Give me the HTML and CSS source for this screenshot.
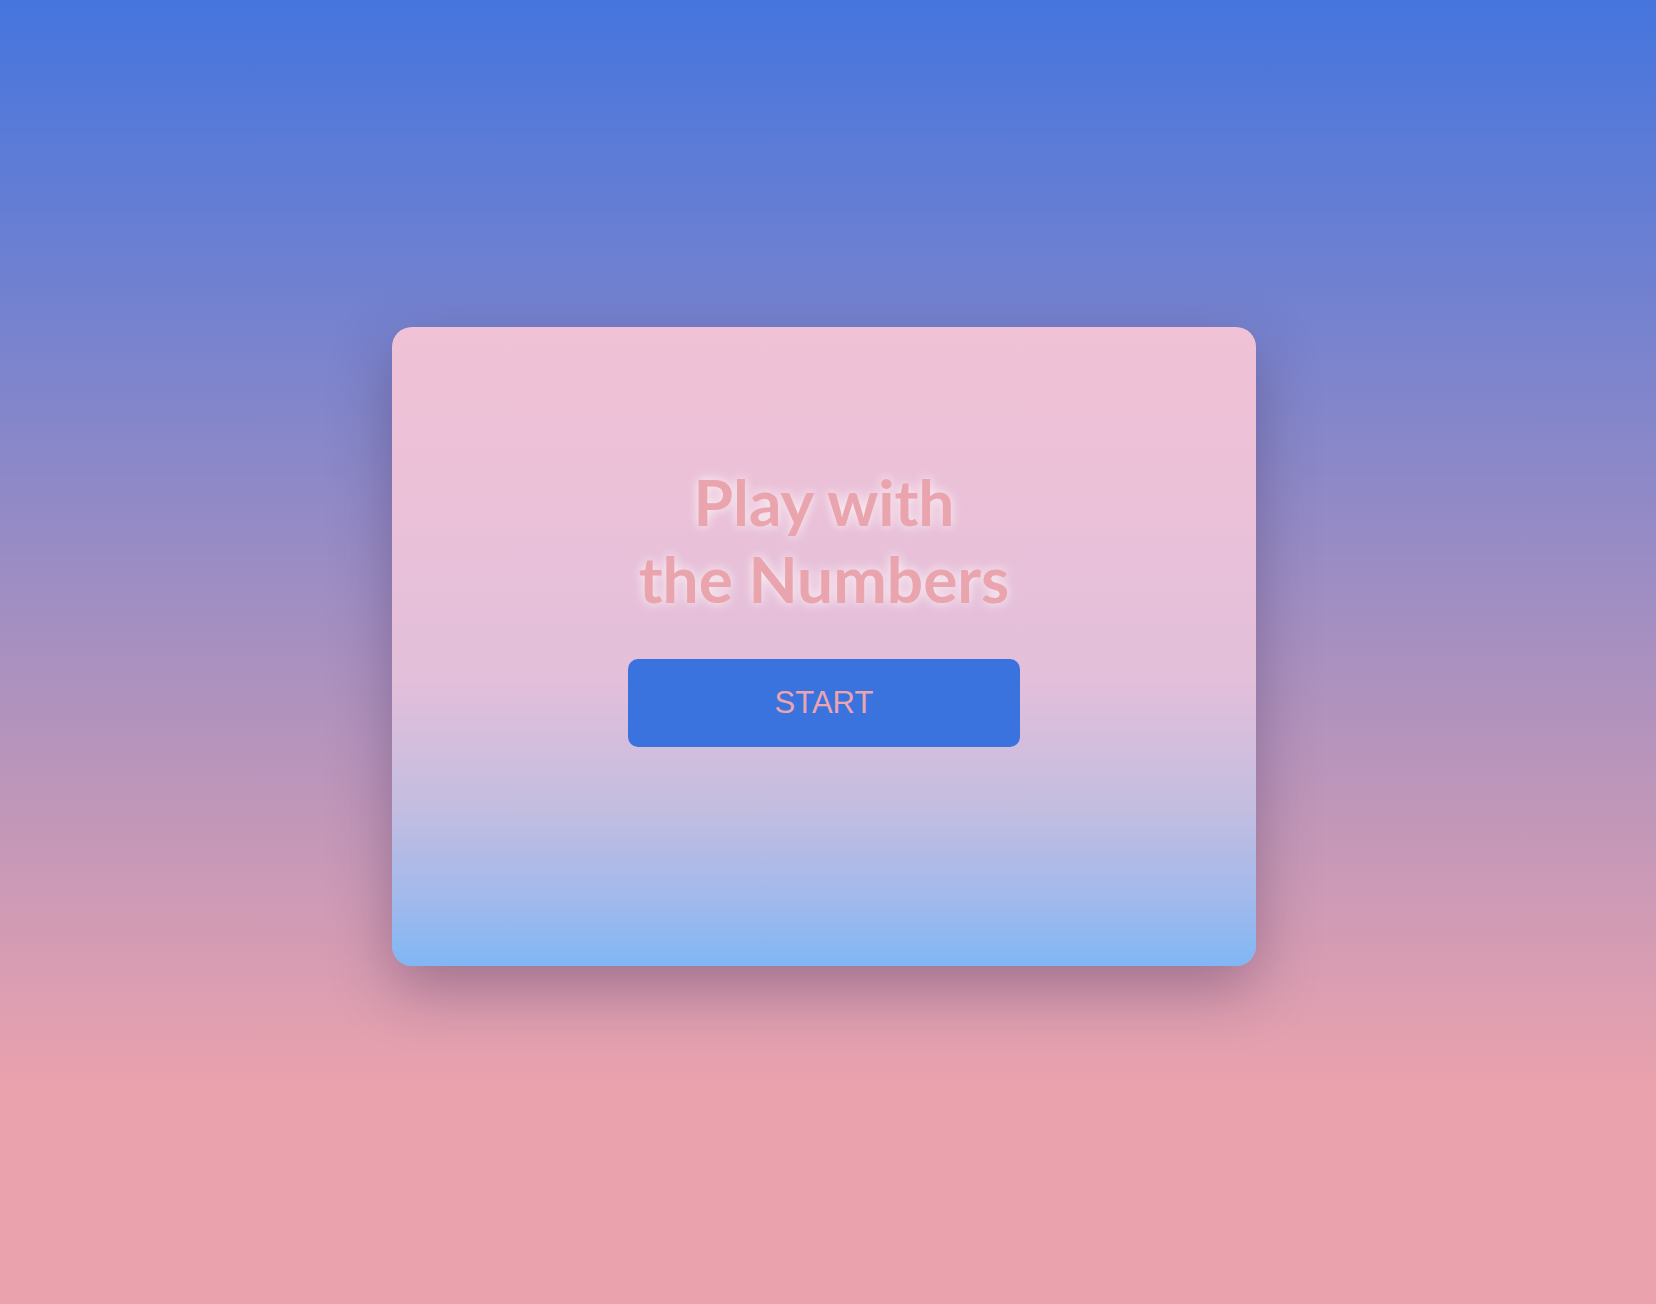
FILE: index.html
```html
<!DOCTYPE html>
<html lang="en">
<head>
<meta charset="utf-8">
<title>Play with the Numbers</title>
<link rel="stylesheet" href="styles.css">
</head>
<body>
<main class="stage">
  <section class="card">
    <h1 class="title">Play with<br>the Numbers</h1>
    <button class="start-btn" type="button">START</button>
  </section>
</main>
</body>
</html>
```

FILE: styles.css
```css
html, body {
  margin: 0;
  padding: 0;
  height: 100%;
}

body {
  background: linear-gradient(to bottom, #4575dd 0px, #eaa2ad 1085px, #eaa2ad 100%);
  background-color: #eaa2ad;
  font-family: "Lato", "Liberation Sans", sans-serif;
}

.stage {
  box-sizing: border-box;
  min-height: 100vh;
  display: flex;
  align-items: center;
  justify-content: center;
  padding: 0 8px 11px 0;
}

.card {
  box-sizing: border-box;
  width: 864px;
  height: 639px;
  border-radius: 20px;
  padding-top: 137px;
  display: flex;
  flex-direction: column;
  align-items: center;
  background: linear-gradient(to bottom,
    #f1c2d6 0%,
    #e3bfda 55%,
    #c4bde0 75%,
    #a0b9ec 90%,
    #80b7f4 100%);
  box-shadow: 0 22px 60px rgba(50, 30, 70, 0.34);
}

.title {
  margin: 0;
  font-family: "Lato", sans-serif;
  font-weight: 700;
  font-size: 64px;
  line-height: 1.2;
  text-align: center;
  color: #eaa4ae;
  text-shadow: 0 0 12px rgba(255, 255, 255, 0.9);
}

.start-btn {
  margin-top: 41px;
  width: 392px;
  height: 88px;
  border: none;
  border-radius: 10px;
  background: #3b73de;
  color: #eca4ae;
  font-family: "Liberation Sans", Arial, sans-serif;
  font-size: 31px;
  padding: 0;
  cursor: pointer;
}
```
